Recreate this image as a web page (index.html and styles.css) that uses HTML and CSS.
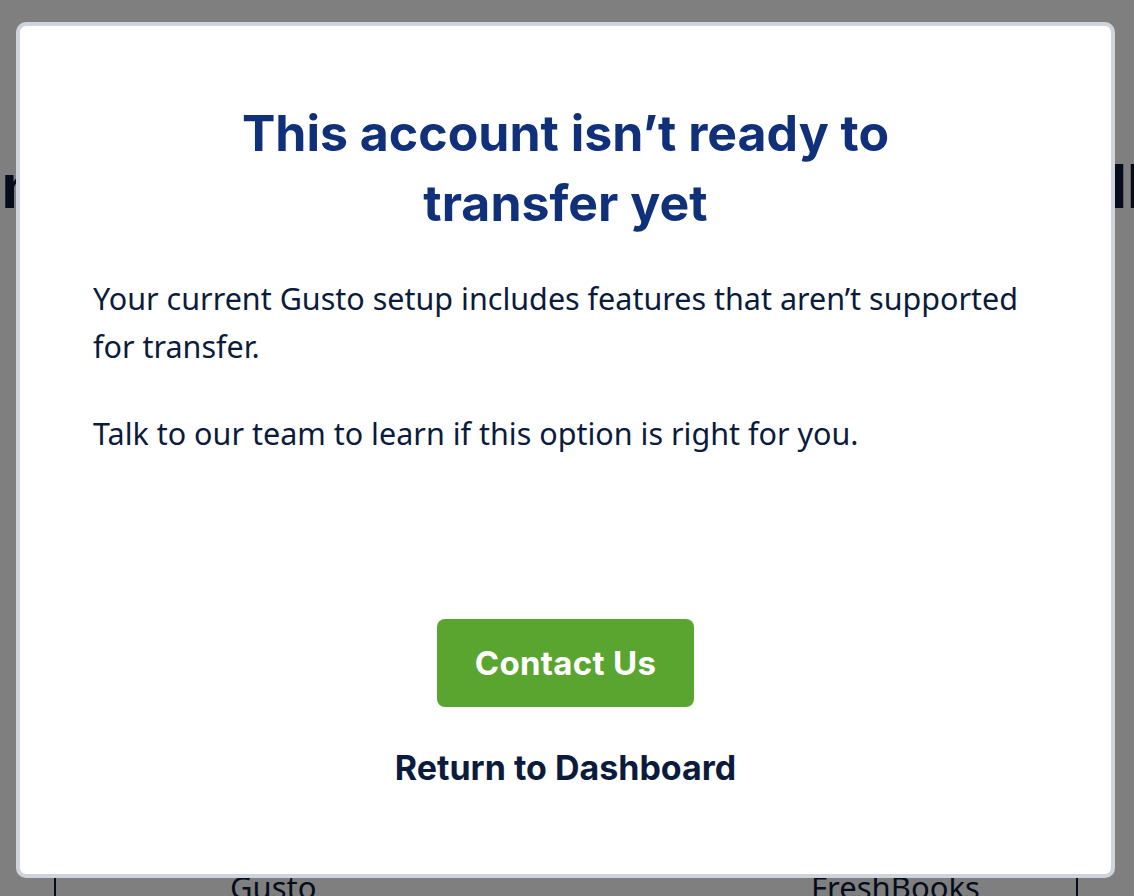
FILE: index.html
```html
<!DOCTYPE html>
<html>
<head>
<meta charset="utf-8">
<link rel="stylesheet" href="styles.css">
</head>
<body>
<div class="page">
  <h1 class="page-title">Connect your account to move your payroll toc</h1>
  <div class="compare">
    <div class="compare-col">Gusto</div>
    <div class="compare-col">FreshBooks</div>
  </div>
</div>
<div class="overlay"></div>
<div class="modal" role="dialog">
  <h2 class="modal-title">This account isn’t ready to<br>transfer yet</h2>
  <div class="modal-body">
    <p>Your current Gusto setup includes features that aren’t supported for transfer.</p>
    <p>Talk to our team to learn if this option is right for you.</p>
  </div>
  <div class="modal-actions">
    <button class="btn-primary">Contact Us</button>
    <button class="btn-link">Return to Dashboard</button>
  </div>
</div>
</body>
</html>
```
FILE: styles.css
```css
html, body {
  margin: 0;
  padding: 0;
  height: 100%;
  overflow: hidden;
  background: #ffffff;
}
.page {
  padding-top: 150px;
  font-family: "Inter", "Liberation Sans", sans-serif;
  color: #0b1b3b;
}
.page-title {
  margin: 0 -500px;
  font-size: 60px;
  font-weight: 700;
  white-space: nowrap;
  text-align: center;
}
.compare {
  display: grid;
  grid-template-columns: 1fr 1fr;
  margin: 644px 56px 0 54px;
  border-left: 2px solid #0b1b3b;
  border-right: 2px solid #0b1b3b;
  height: 60px;
  font-family: "Noto Sans", sans-serif;
  font-size: 31px;
}
.compare-col {
  text-align: left;
}
.compare-col:first-child { padding-left: 174px; }
.compare-col:last-child { padding-left: 245px; }
.overlay {
  position: fixed;
  inset: 0;
  background: rgba(0, 0, 0, 0.5);
}
.modal {
  position: fixed;
  left: 16px;
  top: 22px;
  width: 1091px;
  height: 848px;
  background: #ffffff;
  border: 4px solid #cfd4dc;
  border-radius: 10px;
  display: flex;
  flex-direction: column;
}
.modal-title {
  margin: 72px 0 0;
  text-align: center;
  font-family: "Inter", "Liberation Sans", sans-serif;
  font-weight: 700;
  font-size: 50px;
  line-height: 70px;
  letter-spacing: 0;
  color: #10307a;
}
.modal-body {
  padding: 0 73px;
  margin-top: 36px;
  font-family: "Noto Sans", "Open Sans", sans-serif;
  font-size: 30.5px;
  line-height: 48px;
  color: #0b1b3b;
}
.modal-body p {
  margin: 0 0 39px;
}
.modal-actions {
  margin-top: auto;
  margin-bottom: 86px;
  display: flex;
  flex-direction: column;
  align-items: center;
}
.btn-primary {
  width: 257px;
  height: 88px;
  border: none;
  border-radius: 8px;
  background: #5aa530;
  color: #ffffff;
  font-family: "Inter", "Liberation Sans", sans-serif;
  font-weight: 700;
  font-size: 33px;
  letter-spacing: 0.3px;
}
.btn-link {
  margin-top: 40px;
  border: none;
  background: none;
  padding: 0;
  color: #0b1b3b;
  font-family: "Inter", "Liberation Sans", sans-serif;
  font-weight: 700;
  font-size: 34px;
  letter-spacing: 0;
}
```
